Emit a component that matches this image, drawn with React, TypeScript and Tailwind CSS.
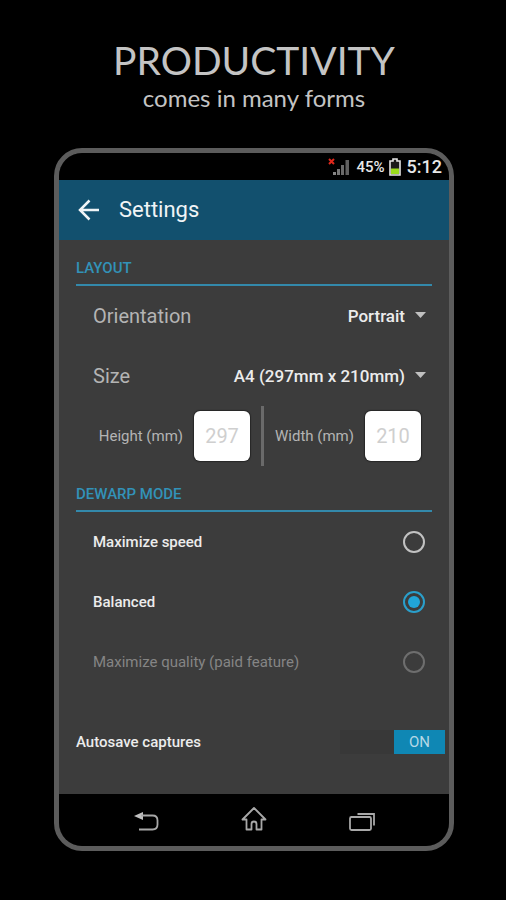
import { useState } from "react";
import type { ReactNode } from "react";

function SectionTitle({ children }: { children: ReactNode }) {
  return (
    <h3 className="flex h-[46px] items-end border-b-2 border-[#3389ab] pb-1.5 text-[15px] leading-5 font-medium text-[#3292b8]">
      {children}
    </h3>
  );
}

function SelectRow({ id, label, options }: { id: string; label: string; options: string[] }) {
  return (
    <div className="flex h-[60px] items-center justify-between pr-1.5 pl-[17px]">
      <label htmlFor={id} className="text-[20px] leading-6 text-[#b4b4b4]">
        {label}
      </label>
      <div className="relative">
        <select
          id={id}
          className="appearance-none bg-transparent pr-[21px] text-[17px] leading-6 font-medium text-[#ececec] outline-none [text-align-last:right]"
        >
          {options.map((option) => (
            <option key={option}>{option}</option>
          ))}
        </select>
        <svg className="pointer-events-none absolute top-2 right-0 h-1.5 w-[11px]" viewBox="0 0 12 6" preserveAspectRatio="none" aria-hidden="true">
          <path d="M0 0h12L6 6z" fill="#c0c0c0" />
        </svg>
      </div>
    </div>
  );
}

function SizeField({ id, label, value }: { id: string; label: string; value: string }) {
  return (
    <div className="flex items-center gap-[11px]">
      <label htmlFor={id} className="text-[15px] leading-5 text-[#b4b4b4]">
        {label}
      </label>
      <input
        id={id}
        defaultValue={value}
        disabled
        className="h-[50px] w-14 rounded-md bg-white text-center text-[20px] text-[#cfcfcf] shadow-[0_0_1px_1px_#262626]"
      />
    </div>
  );
}

const modes = [
  { id: "speed", label: "Maximize speed", disabled: false },
  { id: "balanced", label: "Balanced", disabled: false },
  { id: "quality", label: "Maximize quality (paid feature)", disabled: true },
];

function StatusBar() {
  return (
    <div className="flex h-[27px] items-center justify-end bg-black pr-[7px] font-medium text-[#e8e8e8]">
      <svg className="mr-1.5 h-[18px] w-[22px]" viewBox="0 0 22 18" aria-label="No signal">
        <path d="M1 1l5 5M6 1L1 6" stroke="#e0281c" strokeWidth="2" />
        <path d="M5 14h3v3H5z" fill="#858585" />
        <path d="M9 11h3v6H9z" fill="#777" />
        <path d="M13 7h3v10h-3z" fill="#6b6b6b" />
        <path d="M17.500 2H21v15h-3.500z" fill="#606060" />
      </svg>
      <span className="mr-1 text-[15px] leading-5">45%</span>
      <svg className="mr-1.5 h-[18px] w-3" viewBox="0 0 12 18" aria-label="Battery">
        <path d="M4 1h4v2h3v14H1V3h3z" fill="#1a1a1a" stroke="#e6e6e6" strokeWidth="1.600" />
        <path d="M2 10.500h8V16H2z" fill="#9bdc1c" />
      </svg>
      <span className="text-[18px] leading-5">5:12</span>
    </div>
  );
}

function NavBar() {
  return (
    <nav className="flex h-[52px] items-center justify-center gap-20 bg-black pt-0.5 text-[#a8a8a8]">
      <button aria-label="Back">
        <svg className="h-7 w-7" viewBox="0 0 28 28" fill="none">
          <path d="M2 9l9-4v8z" fill="#c0c0c0" />
          <path d="M9 8.500h11.500q5 0 5 5v4q0 5-5 5H7" stroke="currentColor" strokeWidth="1.800" />
        </svg>
      </button>
      <button aria-label="Home">
        <svg className="h-7 w-7" viewBox="0 0 28 28" fill="none" stroke="currentColor" strokeWidth="1.800" strokeLinejoin="round">
          <path d="M14 1L2.500 12.500H6.500V22.500H11.500V17q0-2.500 2.500-2.500t2.500 2.500V22.500H21.500V12.500H25.500z" />
        </svg>
      </button>
      <button aria-label="Recent apps">
        <svg className="h-7 w-7" viewBox="0 0 28 28" fill="none" stroke="currentColor" strokeWidth="1.800">
          <rect x="2" y="10" width="21" height="13" rx="1.500" />
          <path d="M9.500 7H26V18.500" />
        </svg>
      </button>
    </nav>
  );
}

export default function App() {
  const [mode, setMode] = useState("balanced");
  const [autosave, setAutosave] = useState(true);

  return (
    <main className="min-h-screen bg-black pt-9 pr-[52px] pb-12 pl-[54px] font-[Roboto,sans-serif]">
      <header className="text-center font-[Lato,sans-serif] text-[#c4c4c4]">
        <h1 className="text-[39px] leading-[48px]">PRODUCTIVITY</h1>
        <p className="text-[24px] leading-7">comes in many forms</p>
      </header>

      <section className="mt-9 overflow-hidden rounded-[28px] border-[5px] border-[#5c5c5c] bg-[#3c3c3c]">
        <StatusBar />
        <div className="flex h-[60px] items-center gap-[19px] bg-[#12506e] pl-[19px] text-[#f0f4f6]">
          <button aria-label="Back">
            <svg className="h-[22px] w-[22px]" viewBox="0 0 22 22" fill="none" stroke="currentColor" strokeWidth="2.500">
              <path d="M21 11H2.500M11.500 1.500L2 11l9.500 9.500" />
            </svg>
          </button>
          <h2 className="text-[22px] leading-7">Settings</h2>
        </div>

        <div className="px-[17px] pb-[22px]">
          <SectionTitle>LAYOUT</SectionTitle>
          <SelectRow id="orientation" label="Orientation" options={["Portrait", "Landscape"]} />
          <SelectRow id="size" label="Size" options={["A4 (297mm x 210mm)"]} />
          <div className="flex h-[60px] items-center justify-end gap-[11px] pr-[11px]">
            <SizeField id="height" label="Height (mm)" value="297" />
            <div className="h-full w-[3px] bg-[#6a6a6a]" />
            <SizeField id="width" label="Width (mm)" value="210" />
          </div>

          <SectionTitle>DEWARP MODE</SectionTitle>
          {modes.map((item) => (
            <div key={item.id} className="flex h-[60px] items-center justify-between pr-[7px] pl-[17px]">
              <label
                htmlFor={item.id}
                className={
                  item.disabled
                    ? "text-[15px] leading-5 text-[#858585]"
                    : "text-[15px] leading-5 font-medium text-[#ececec]"
                }
              >
                {item.label}
              </label>
              <input
                id={item.id}
                type="radio"
                name="mode"
                checked={mode === item.id}
                disabled={item.disabled}
                onChange={() => setMode(item.id)}
                className="h-[22px] w-[22px] appearance-none rounded-full border-2 border-[#c2c2c2] bg-clip-content p-[3px] checked:border-[#2a9fcb] checked:bg-[#21a5d8] disabled:border-[#6e6e6e]"
              />
            </div>
          ))}

          <div className="-mr-[13px] mt-5 flex h-[60px] items-center justify-between">
            <span id="autosave" className="text-[15px] leading-5 font-medium text-[#ececec]">
              Autosave captures
            </span>
            <button
              role="switch"
              aria-checked={autosave}
              aria-labelledby="autosave"
              onClick={() => setAutosave(!autosave)}
              className={autosave ? "flex h-6 w-[105px] justify-end bg-[#383838]" : "flex h-6 w-[105px] bg-[#383838]"}
            >
              <span className="h-6 w-[51px] bg-[#0f87b4] text-[15px] leading-6 text-[#b5d8e6]">
                {autosave ? "ON" : "OFF"}
              </span>
            </button>
          </div>
        </div>
        <NavBar />
      </section>
    </main>
  );
}
